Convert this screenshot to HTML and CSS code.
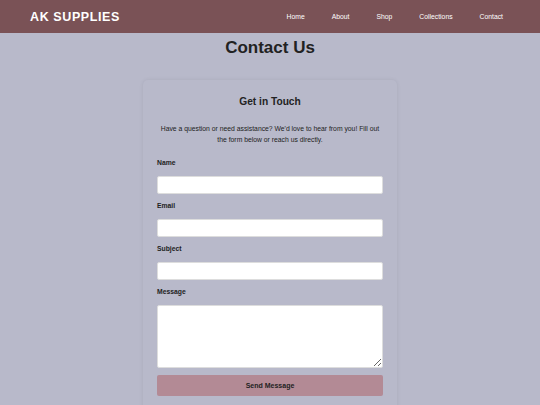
FILE: index.html
```html
<!DOCTYPE html>
<html>
<head>
<meta charset="utf-8">
<link rel="stylesheet" href="styles.css">
</head>
<body>
<header class="topbar">
  <div class="logo">AK SUPPLIES</div>
  <nav class="nav">
    <a href="#">Home</a>
    <a href="#">About</a>
    <a href="#">Shop</a>
    <a href="#">Collections</a>
    <a href="#">Contact</a>
  </nav>
</header>
<main class="main">
  <h1 class="page-title">Contact Us</h1>
  <section class="card">
    <h2 class="card-title">Get in Touch</h2>
    <p class="intro">Have a question or need assistance? We'd love to hear from you! Fill out the form below or reach us directly.</p>
    <form class="form">
      <label class="label">Name</label>
      <input class="field" type="text">
      <label class="label">Email</label>
      <input class="field" type="text">
      <label class="label">Subject</label>
      <input class="field" type="text">
      <label class="label">Message</label>
      <textarea class="field area"></textarea>
      <button class="send" type="button">Send Message</button>
    </form>
  </section>
</main>
</body>
</html>
```
FILE: styles.css
```css
* { box-sizing: border-box; }
html, body { margin: 0; padding: 0; }
body {
  background: #b8b9ca;
  font-family: "Liberation Sans", Arial, sans-serif;
  color: #222;
  height: 405px;
  overflow: hidden;
}
.topbar {
  height: 33px;
  background: #7a5256;
  display: flex;
  align-items: center;
  justify-content: space-between;
  padding: 0 37px 0 30px;
}
.logo {
  color: #fff;
  font-weight: bold;
  font-size: 12.5px;
  letter-spacing: 0.6px;
}
.nav {
  display: flex;
  gap: 27px;
}
.nav a {
  color: #fff;
  text-decoration: none;
  font-size: 6.8px;
}
.main {
  display: flex;
  flex-direction: column;
  align-items: center;
}
.page-title {
  margin: 2px 0 0;
  font-size: 17px;
  line-height: 26px;
  color: #222;
}
.card {
  margin-top: 19px;
  width: 254px;
  padding: 14px 14px 20px;
  border-radius: 5px;
  background: #b8b9ca;
  box-shadow: 0 0 4px rgba(0,0,0,0.08);
}
.card-title {
  margin: 0;
  text-align: center;
  font-size: 10.2px;
  line-height: 16px;
  color: #222;
}
.intro {
  margin: 13px 0 0;
  text-align: center;
  font-size: 6.8px;
  line-height: 11px;
  color: #222;
}
.form {
  display: flex;
  flex-direction: column;
  margin-top: 13px;
}
.label {
  font-size: 6.8px;
  font-weight: bold;
  line-height: 10px;
  margin-bottom: 8px;
  color: #222;
}
.field {
  display: block;
  width: 100%;
  height: 18px;
  border: 1px solid #ddd;
  border-radius: 2px;
  background: #fff;
  margin: 0 0 7px;
  padding: 0;
}
.area {
  height: 63px;
  resize: vertical;
}
.send {
  height: 21px;
  width: 100%;
  border: none;
  border-radius: 2px;
  background: #b38a95;
  color: #222;
  font-family: "Liberation Sans", Arial, sans-serif;
  font-size: 7px;
  font-weight: bold;
}
```
